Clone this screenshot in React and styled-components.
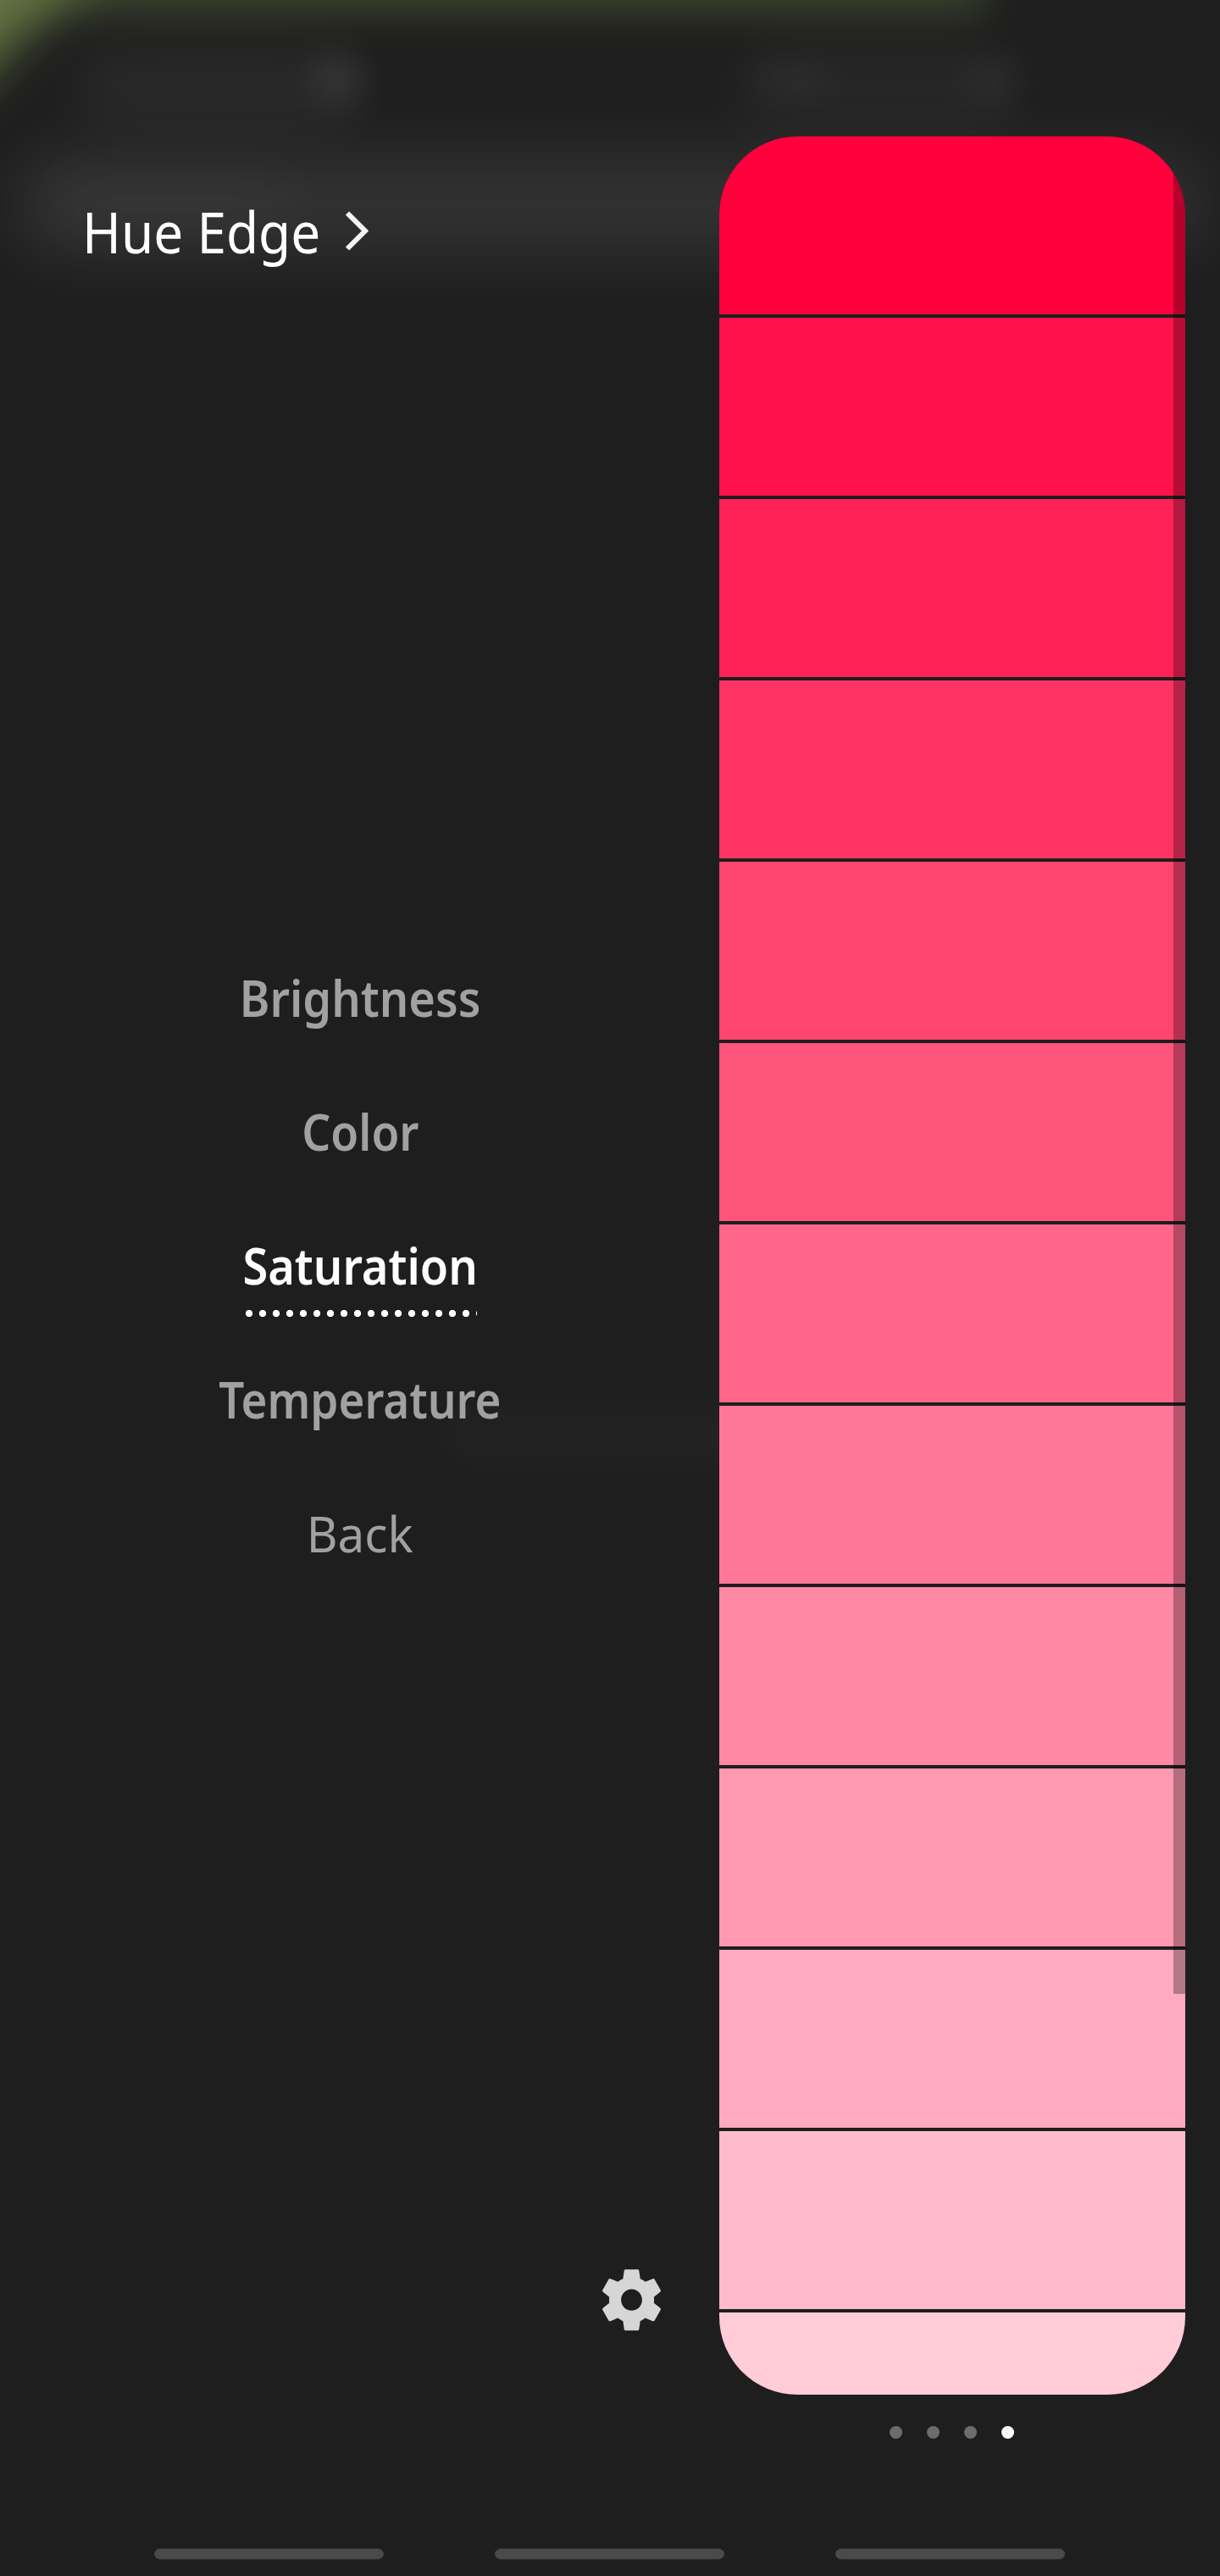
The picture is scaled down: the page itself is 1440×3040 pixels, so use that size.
import React from "react";
import styled, { createGlobalStyle } from "styled-components";

const GlobalStyle = createGlobalStyle`
  *, *::before, *::after { box-sizing: border-box; }
  body { margin: 0; background: #1e1e1e; }
`;

const Screen = styled.main`
  position: relative;
  display: flex;
  flex-direction: column;
  width: 1440px;
  height: 3040px;
  overflow: hidden;
  isolation: isolate;
  background: #1e1e1e;
  font-family: "Noto Sans", "Open Sans", sans-serif;
`;

const Backdrop = styled.div`
  position: absolute;
  inset: 0;
  z-index: -1;
  overflow: hidden;
`;

const Glow = styled.span`
  position: absolute;
  left: ${(p) => p.$x}px;
  top: ${(p) => p.$y}px;
  width: ${(p) => p.$w}px;
  height: ${(p) => p.$h}px;
  border-radius: ${(p) => p.$r || 0}px;
  background: ${(p) => p.$color || "#fff"};
  filter: blur(${(p) => p.$blur}px);
  opacity: ${(p) => p.$alpha};
`;

const CornerGlow = styled.span`
  position: absolute;
  left: 0;
  top: 0;
  width: 200px;
  height: 200px;
  background: linear-gradient(
    135deg,
    rgba(100, 117, 66, 0.93) 0,
    rgba(100, 117, 66, 0.82) 22px,
    rgba(100, 117, 66, 0.55) 45px,
    rgba(100, 117, 66, 0.23) 68px,
    rgba(100, 117, 66, 0.07) 88px,
    rgba(100, 117, 66, 0) 112px
  );
`;

const Main = styled.div`
  display: flex;
  height: 2880px;
`;

const Side = styled.section`
  display: flex;
  flex-direction: column;
  width: 849px;
  padding-top: 228px;
`;

const PanelTitle = styled.button`
  display: flex;
  align-items: center;
  height: 90px;
  padding: 0 0 0 97px;
  border: 0;
  background: none;
  color: #fff;
  font: 400 67px/90px "Noto Sans", "Open Sans", sans-serif;
`;

const TitleText = styled.span`
  width: 310px;
  text-align: left;
  white-space: nowrap;
  transform: scaleX(0.926);
  transform-origin: left;
`;

const Chevron = styled.svg`
  width: 30px;
  height: 50px;
  fill: none;
  stroke: #f4f4f4;
  stroke-width: 6px;
`;

const Menu = styled.nav`
  display: flex;
  flex-direction: column;
  align-items: center;
  margin-top: 779px;
`;

const MenuItem = styled.a`
  display: flex;
  flex-direction: column;
  align-items: center;
  height: 158px;
  padding: 38px 0 0 1px;
  color: ${(p) => (p.$active ? "#fff" : "#a1a1a1")};
  font-size: 59px;
  font-weight: ${(p) => (p.$light ? 400 : 600)};
  line-height: 84px;
  white-space: nowrap;
`;

const Label = styled.span`
  transform: scaleX(${(p) => p.$stretch});
`;

const DottedLine = styled.span`
  width: 273px;
  height: 8px;
  margin: 11px 0 0 3px;
  background: radial-gradient(circle at 4px 4px, #fff 3.8px, transparent 4.5px) 0 0 / 16px 8px repeat-x;
`;

const SettingsButton = styled.button`
  display: flex;
  margin: auto 61.3px 122.8px auto;
  padding: 0;
  border: 0;
  background: none;
  color: #d6d6d6;
`;

const EdgePanel = styled.section`
  display: flex;
  flex-direction: column;
  align-items: center;
  width: 550px;
  padding-top: 161px;
`;

const Swatches = styled.div`
  position: relative;
  display: flex;
  flex-direction: column;
  gap: 4px;
  width: 550px;
  height: 2665px;
  border-radius: 92px;
  overflow: hidden;
  background: #1e1e1e;
`;

const Swatch = styled.div`
  flex: none;
  height: 210px;
  background: ${(p) => p.$color};
`;

const Scrollbar = styled.span`
  position: absolute;
  top: 0;
  right: 0;
  width: 14px;
  height: 2192px;
  background: rgba(0, 0, 0, 0.29);
`;

const Pager = styled.div`
  display: flex;
  gap: 29px;
  margin: 36.5px 0.6px 0 0;
`;

const PageDot = styled.span`
  width: 15px;
  height: 15px;
  border-radius: 50%;
  background: ${(p) => (p.$active ? "#fafafa" : "#6c6c6c")};
`;

const GestureBar = styled.footer`
  display: flex;
  gap: 131px;
  padding: 127px 0 0 182px;
`;

const GestureHandle = styled.span`
  width: 271px;
  height: 14px;
  border: 1px solid #2c2c2c;
  border-width: 1px 0;
  border-radius: 7px;
  background: #4a4a4a;
`;

const swatchColors = Array.from({ length: 13 }, (_, i) => `rgb(255, ${17 * i}, ${60 + 13 * i})`);

const menu = [
  { label: "Brightness", stretch: 0.918 },
  { label: "Color", stretch: 0.905 },
  { label: "Saturation", stretch: 0.918, active: true },
  { label: "Temperature", stretch: 0.897 },
  { label: "Back", stretch: 0.96, light: true },
];

export default function App() {
  return (
    <Screen>
      <GlobalStyle />
      <Backdrop>
        <Glow $x={-60} $y={-90} $w={1225} $h={106} $blur={24} $color="#9fc060" $alpha={0.22} />
        <Glow $x={15} $y={178} $w={1410} $h={125} $r={62} $blur={36} $alpha={0.082} />
        <Glow $x={60} $y={205} $w={290} $h={70} $r={35} $blur={34} $alpha={0.025} />
        <Glow $x={90} $y={55} $w={330} $h={95} $r={45} $blur={28} $alpha={0.045} />
        <Glow $x={370} $y={62} $w={60} $h={62} $r={31} $blur={20} $alpha={0.08} />
        <Glow $x={870} $y={55} $w={330} $h={95} $r={45} $blur={28} $alpha={0.035} />
        <Glow $x={890} $y={75} $w={90} $h={35} $r={17} $blur={20} $alpha={0.03} />
        <Glow $x={1145} $y={68} $w={56} $h={56} $r={28} $blur={20} $alpha={0.04} />
        <Glow $x={520} $y={1670} $w={400} $h={50} $r={25} $blur={24} $alpha={0.025} />
        <CornerGlow />
      </Backdrop>

      <Main>
        <Side>
          <PanelTitle>
            <TitleText>Hue Edge</TitleText>
            <Chevron viewBox="0 0 30 50">
              <path d="M3 3.5 L24 24.5 L3 45.5" />
            </Chevron>
          </PanelTitle>
          <Menu>
            {menu.map((item) => (
              <MenuItem key={item.label} $active={item.active} $light={item.light}>
                <Label $stretch={item.stretch}>{item.label}</Label>
                {item.active && <DottedLine />}
              </MenuItem>
            ))}
          </Menu>
          <SettingsButton aria-label="Settings">
            <svg width="85" height="86.4" viewBox="0 0 24 24" preserveAspectRatio="none" fill="currentColor">
              <path d="M19.43 12.98c.04-.32.07-.64.07-.98s-.03-.66-.07-.98l2.11-1.65c.19-.15.24-.42.12-.64l-2-3.46c-.12-.22-.39-.3-.61-.22l-2.49 1c-.52-.4-1.08-.73-1.69-.98l-.38-2.65C14.46 2.18 14.25 2 14 2h-4c-.25 0-.46.18-.49.42l-.38 2.65c-.61.25-1.17.59-1.69.98l-2.49-1c-.23-.09-.49 0-.61.22l-2 3.46c-.13.22-.07.49.12.64l2.11 1.65c-.04.32-.07.65-.07.98s.03.66.07.98l-2.11 1.65c-.19.15-.24.42-.12.64l2 3.46c.12.22.39.3.61.22l2.49-1c.52.4 1.08.73 1.69.98l.38 2.65c.03.24.24.42.49.42h4c.25 0 .46-.18.49-.42l.38-2.65c.61-.25 1.17-.59 1.69-.98l2.49 1c.23.09.49 0 .61-.22l2-3.46c.12-.22.07-.49-.12-.64l-2.11-1.65zM12 15.5c-1.93 0-3.5-1.57-3.5-3.5s1.57-3.5 3.5-3.5 3.5 1.57 3.5 3.5-1.57 3.5-3.5 3.5z" />
            </svg>
          </SettingsButton>
        </Side>

        <EdgePanel>
          <Swatches>
            {swatchColors.map((color) => (
              <Swatch key={color} $color={color} />
            ))}
            <Scrollbar />
          </Swatches>
          <Pager>
            <PageDot />
            <PageDot />
            <PageDot />
            <PageDot $active />
          </Pager>
        </EdgePanel>
      </Main>

      <GestureBar>
        <GestureHandle />
        <GestureHandle />
        <GestureHandle />
      </GestureBar>
    </Screen>
  );
}
